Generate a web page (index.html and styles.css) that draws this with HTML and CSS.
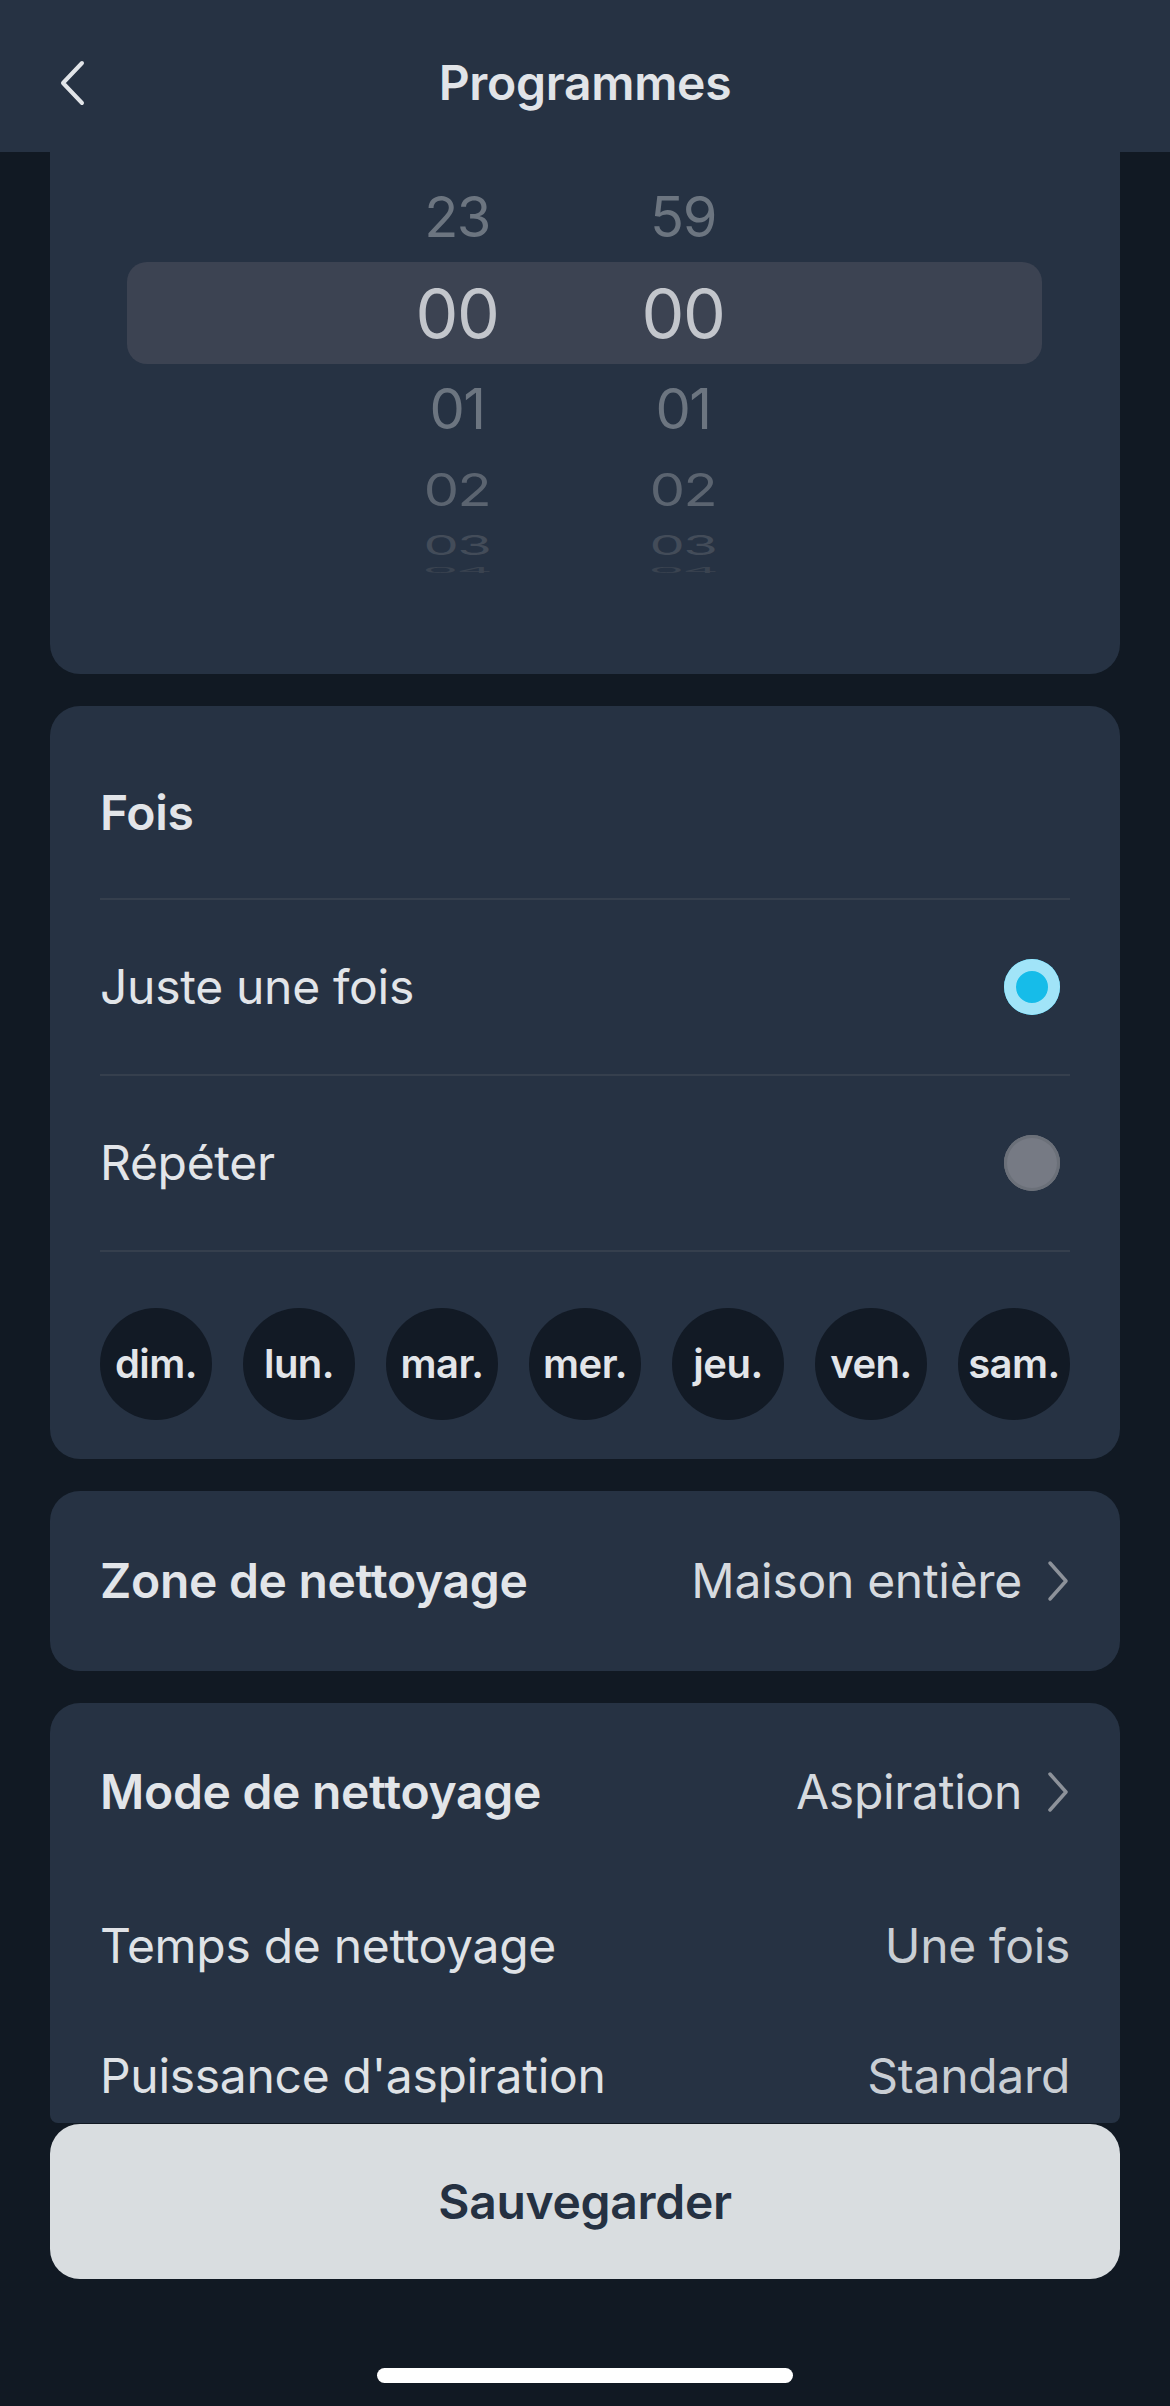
FILE: index.html
```html
<!DOCTYPE html>
<html lang="fr">
<head>
<meta charset="utf-8">
<title>Programmes</title>
<link rel="stylesheet" href="styles.css">
</head>
<body>
<div class="screen">
  <header class="topbar">
    <button class="back" aria-label="Retour">
      <svg width="26" height="46" viewBox="0 0 26 46"><path d="M23 3 L4 23 L23 43" fill="none" stroke="#e1e4e8" stroke-width="4" stroke-linecap="round" stroke-linejoin="round"/></svg>
    </button>
    <h1 class="title">Programmes</h1>
    <span class="spacer"></span>
  </header>

  <main class="content">
    <section class="card picker">
      <div class="wheel-row r-near"><span>23</span><span>59</span></div>
      <div class="wheel-row r-sel"><span>00</span><span>00</span></div>
      <div class="wheel-row r-near"><span>01</span><span>01</span></div>
      <div class="wheel-row r-2"><span>02</span><span>02</span></div>
      <div class="wheel-row r-3"><span>03</span><span>03</span></div>
      <div class="wheel-row r-4"><span>04</span><span>04</span></div>
    </section>

    <section class="card fois">
      <div class="card-title">Fois</div>
      <div class="option"><span class="opt-label">Juste une fois</span><span class="radio on"></span></div>
      <div class="option"><span class="opt-label">Répéter</span><span class="radio"></span></div>
      <div class="days">
        <span class="day">dim.</span>
        <span class="day">lun.</span>
        <span class="day">mar.</span>
        <span class="day">mer.</span>
        <span class="day">jeu.</span>
        <span class="day">ven.</span>
        <span class="day">sam.</span>
      </div>
    </section>

    <section class="card zone">
      <div class="nav-row">
        <span class="nav-label">Zone de nettoyage</span>
        <span class="nav-value">Maison entière
          <svg class="chev" width="24" height="42" viewBox="0 0 24 42"><path d="M4 3 L20 21 L4 39" fill="none" stroke="#8d929a" stroke-width="3.5" stroke-linecap="round" stroke-linejoin="round"/></svg>
        </span>
      </div>
    </section>

    <section class="card mode">
      <div class="nav-row first">
        <span class="nav-label">Mode de nettoyage</span>
        <span class="nav-value">Aspiration
          <svg class="chev" width="24" height="42" viewBox="0 0 24 42"><path d="M4 3 L20 21 L4 39" fill="none" stroke="#8d929a" stroke-width="3.5" stroke-linecap="round" stroke-linejoin="round"/></svg>
        </span>
      </div>
      <div class="info-row"><span class="info-label">Temps de nettoyage</span><span class="info-value">Une fois</span></div>
      <div class="info-row"><span class="info-label">Puissance d'aspiration</span><span class="info-value">Standard</span></div>
    </section>
  </main>

  <footer class="footer">
    <button class="save">Sauvegarder</button>
    <div class="home-indicator"></div>
  </footer>
</div>
</body>
</html>
```

FILE: styles.css
```css
* { box-sizing: border-box; }

html, body {
  margin: 0;
  padding: 0;
  background: #111923;
}

body {
  font-family: "Inter", "Noto Sans", "Liberation Sans", sans-serif;
  color: #e2e5e9;
  font-size: 48px;
  line-height: 58px;
  letter-spacing: -0.3px;
}

.screen {
  width: 1170px;
  height: 2406px;
  overflow: hidden;
  display: flex;
  flex-direction: column;
}

/* Header */
.topbar {
  display: grid;
  grid-template-columns: 1fr auto 1fr;
  align-items: center;
  height: 152px;
  padding: 54px 0 40px;
  background: #263243;
}

.back {
  justify-self: start;
  margin-left: 59px;
  padding: 0;
  border: 0;
  background: none;
  width: 26px;
  height: 46px;
  display: flex;
}

.title {
  margin: 0;
  font-size: 48px;
  line-height: 58px;
  font-weight: 600;
  color: #e1e4e8;
  letter-spacing: -0.3px;
}

/* Content */
.content {
  display: flex;
  flex-direction: column;
  gap: 32px;
}

.card {
  margin: 0 50px;
  padding: 0 50px;
  background: #263243;
  border-radius: 30px;
}

/* Time picker wheel */
.picker {
  padding: 20px 0 99px;
  border-radius: 0 0 30px 30px;
}

.wheel-row {
  display: flex;
  gap: 76px;
  margin: 0 78px 0 77px;
  padding-left: 255px;
  height: 90px;
  overflow: hidden;
}

.wheel-row span {
  width: 150px;
  text-align: center;
  font-size: 56px;
  line-height: 90px;
  font-weight: 400;
  color: #6c7580;
  letter-spacing: -1.5px;
}

.r-sel {
  height: 102px;
  background: #3c4352;
  border-radius: 20px;
}

.r-sel span {
  font-size: 68px;
  line-height: 102px;
  color: #c3c6cc;
}

.r-2 { height: 72px; }
.r-2 span {
  line-height: 72px;
  color: #5b6470;
  transform: scaleY(0.8);
}

.r-3 { height: 39px; }
.r-3 span {
  line-height: 39px;
  color: #434c59;
  transform: scaleY(0.48);
}

.r-4 { height: 10px; }
.r-4 span {
  line-height: 10px;
  color: #3a4350;
  transform: scaleY(0.14);
}

/* Fois card */
.card-title {
  padding: 78px 0 56px;
  font-weight: 600;
  border-bottom: 2px solid #353f4d;
}

.option {
  height: 176px;
  display: flex;
  align-items: center;
  justify-content: space-between;
  border-bottom: 2px solid #353f4d;
}

.opt-label { color: #e2e5e9; }

.radio {
  width: 56px;
  height: 56px;
  margin-right: 10px;
  border-radius: 50%;
  background: #767a84;
  box-shadow: inset 0 0 0 3px #6b7079;
}

.radio.on {
  background: #16bce9;
  box-shadow: inset 0 0 0 12px #a1e4f8;
}

.days {
  display: flex;
  justify-content: space-between;
  padding: 56px 0 39px;
}

.day {
  width: 112px;
  height: 112px;
  border-radius: 50%;
  background: #121a25;
  display: flex;
  align-items: center;
  justify-content: center;
  font-size: 40px;
  font-weight: 600;
  color: #e2e5e9;
  letter-spacing: -0.5px;
}

/* Navigation rows */
.nav-row {
  height: 180px;
  display: flex;
  align-items: center;
  justify-content: space-between;
}

.nav-label {
  font-weight: 600;
  color: #e2e5e9;
}

.nav-value {
  display: flex;
  align-items: center;
  gap: 24px;
  color: #d6dadf;
}

.chev { display: block; }

.mode {
  height: 420px;
  overflow: hidden;
  border-radius: 30px 30px 8px 8px;
}

.nav-row.first { height: 178px; }

.info-row {
  height: 130px;
  display: flex;
  align-items: center;
  justify-content: space-between;
}

.info-label { color: #dfe2e6; }
.info-value { color: #c9ced4; }

/* Footer */
.footer {
  display: flex;
  flex-direction: column;
  align-items: center;
}

.save {
  margin-top: 1px;
  width: 1070px;
  height: 155px;
  border: 0;
  border-radius: 30px;
  background: #d9dde0;
  color: #253142;
  font-family: inherit;
  font-size: 48px;
  font-weight: 600;
  line-height: 58px;
  letter-spacing: -0.3px;
}

.home-indicator {
  margin-top: 89px;
  width: 416px;
  height: 15px;
  border-radius: 8px;
  background: #ffffff;
}
```
